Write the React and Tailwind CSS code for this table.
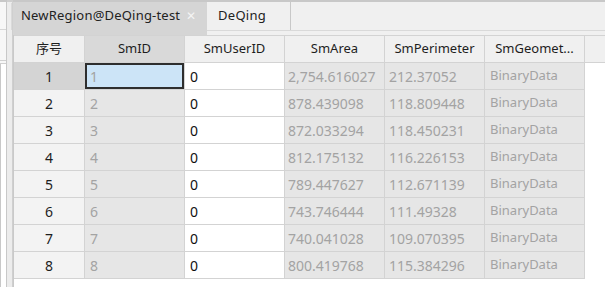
import React from 'react';

const rows = [
  ['2,754.616027', '212.37052'],
  ['878.439098', '118.809448'],
  ['872.033294', '118.450231'],
  ['812.175132', '116.226153'],
  ['789.447627', '112.671139'],
  ['743.746444', '111.49328'],
  ['740.041028', '109.070395'],
  ['800.419768', '115.384296'],
];

const headers = ['SmID', 'SmUserID', 'SmArea', 'SmPerimeter', 'SmGeomet...'];

export default function App() {
  return (
    <div
      className="flex h-[287px] w-[605px] overflow-hidden bg-[#f0f0f0] text-[13px] text-[#1e1e1e]"
      style={{ fontFamily: '"Noto Sans", "Noto Sans CJK SC", sans-serif' }}
    >
      {/* cut-off side panel */}
      <div className="flex w-[7px] flex-col border-t-2 border-r border-[#c8c8c8] bg-[#f7f7f7]">
        <div className="h-[28px] border-b border-[#d6d6d6]" />
        <div className="h-[34px] border-b-4 border-double border-[#d0d0d0]" />
        <div className="flex-1 border-l border-[#c8c8c8] bg-white" />
      </div>
      <div className="flex w-[6px] flex-col border-t-2 border-r border-[#cfcfcf] bg-[#ececec]">
        <div className="mt-[1px] h-[27px] border-r border-[#dadada]" />
      </div>

      <div className="flex flex-1 flex-col">
        {/* tab strip */}
        <div className="flex flex-col border-t-2 border-[#c8c8c8]">
          <div className="flex h-[28px]">
            <div className="flex w-[194px] items-center bg-[#d5d5d5] pl-[8px] text-[13px] text-[#222]">
              <span className="tracking-[0.2px]">NewRegion@DeQing-test</span>
              <span className="ml-[6px] text-[12px] text-[#f4f4f4]">✕</span>
            </div>
            <div className="flex w-[84px] items-center border-r border-[#c8c8c8] pl-[11px] text-[13px] tracking-[0.3px] text-[#222]">
              DeQing
            </div>
            <div className="flex-1" />
          </div>
          <div className="flex h-[5px]">
            <div className="w-[194px] bg-[#d5d5d5]" />
            <div className="flex-1 border-t border-[#d9d9d9]" />
          </div>
        </div>

        {/* grid */}
        <div className="flex flex-1 flex-col border-l border-[#c9c9c9] bg-white">
          <div className="flex h-[28px] border-y border-[#d3d3d3] bg-[#f0f0f0]">
            <div className="flex w-[71px] items-center justify-center border-r border-[#d3d3d3]">序号</div>
            {headers.map((h, i) => (
              <div
                key={h}
                className={`flex w-[100px] items-center justify-center border-r border-[#d3d3d3] ${i === 0 ? 'bg-[#d9d9d9]' : ''}`}
              >
                {h}
              </div>
            ))}
            <div className="flex-1" />
          </div>

          {rows.map((r, i) => (
            <div key={i} className="flex h-[27px]">
              <div
                className={`flex w-[71px] items-center justify-center border-r border-b border-[#d3d3d3] text-[14px] ${i === 0 ? 'bg-[#d4d4d4]' : 'bg-[#f3f3f3]'}`}
              >
                {i + 1}
              </div>
              <div
                className={`flex w-[100px] items-center border-r border-b border-[#d3d3d3] pl-[5px] text-[14px] text-[#a3a3a3] ${i === 0 ? 'bg-[#cce4f7] shadow-[inset_0_0_0_2px_#2e2e2e]' : 'bg-[#e6e6e6]'}`}
              >
                {i + 1}
              </div>
              <div className="flex w-[100px] items-center border-r border-b border-[#d3d3d3] bg-white pl-[5px] text-[14px] text-[#111]">0</div>
              <div className="flex w-[100px] items-center border-r border-b border-[#d3d3d3] bg-[#e6e6e6] pl-[3px] text-[14px] text-[#a3a3a3]">{r[0]}</div>
              <div className="flex w-[100px] items-center border-r border-b border-[#d3d3d3] bg-[#e6e6e6] pl-[4px] text-[14px] text-[#a3a3a3]">{r[1]}</div>
              <div className="flex w-[100px] items-center border-r border-b border-[#d3d3d3] bg-[#e6e6e6] pl-[5px] text-[#a3a3a3]">BinaryData</div>
              <div className="flex-1" />
            </div>
          ))}
        </div>
      </div>
    </div>
  );
}
